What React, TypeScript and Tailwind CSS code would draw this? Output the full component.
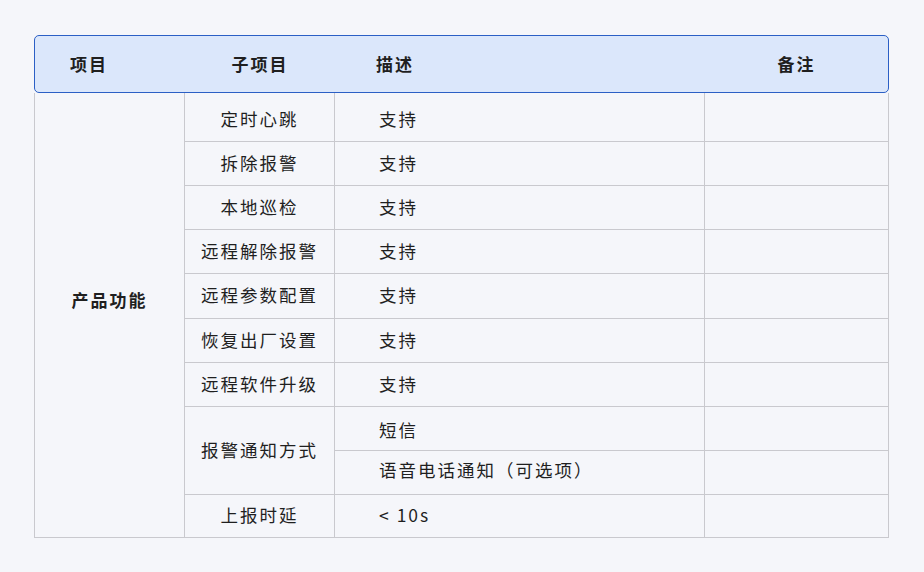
const rows = [
  { sub: "定时心跳", desc: "支持", h: "h-[48px]" },
  { sub: "拆除报警", desc: "支持", h: "h-[44px]" },
  { sub: "本地巡检", desc: "支持", h: "h-[44px]" },
  { sub: "远程解除报警", desc: "支持", h: "h-[44px]" },
  { sub: "远程参数配置", desc: "支持", h: "h-[45px]" },
  { sub: "恢复出厂设置", desc: "支持", h: "h-[44px]" },
  { sub: "远程软件升级", desc: "支持", h: "h-[44px]" },
  { sub: "报警通知方式", desc: "短信", h: "h-[44px]", span: 2, pad: "pt-[4px]" },
  { sub: "", desc: "语音电话通知（可选项）", h: "h-[44px]", skip: true, pad: "pb-[4px]" },
  { sub: "上报时延", desc: "< 10s", h: "h-[43px]" },
];

const cell = "border border-[#c9c9ce] p-0";

const App = () => {
  return (
    <div
      className="min-h-[572px] w-[924px] bg-[#f5f6fa] pt-[35px] pl-[34px] text-[#1f1f1f]"
      style={{ fontFamily: '"Noto Sans CJK SC", "Noto Sans", sans-serif' }}
    >
      <div className="w-[855px]">
        <div className="flex h-[58px] items-center rounded-[5px] border border-[#2b5fc5] bg-[#dbe7fb] text-[17px] font-bold tracking-[2px]">
          <div className="w-[150px] pl-[35px]">项目</div>
          <div className="w-[150px] text-center">子项目</div>
          <div className="w-[370px] pl-[41px]">描述</div>
          <div className="flex-1 text-center">备注</div>
        </div>

        <table className="w-[855px] table-fixed border-collapse text-[17.5px] tracking-[2px]">
          <colgroup>
            <col className="w-[150px]" />
            <col className="w-[150px]" />
            <col className="w-[370px]" />
            <col />
          </colgroup>
          <tbody>
            {rows.map((r, i) => (
              <tr key={i} className={r.h}>
                {i === 0 && (
                  <td rowSpan={10} className={`${cell} border-t-0 pb-[30px] text-center text-[17px] font-bold`}>
                    产品功能
                  </td>
                )}
                {!r.skip && (
                  <td
                    rowSpan={r.span ?? 1}
                    className={`${cell} text-center ${i === 0 ? "border-t-0 pt-[4px]" : ""}`}
                  >
                    {r.sub}
                  </td>
                )}
                <td className={`${cell} pl-[44px] ${i === 0 ? "border-t-0 pt-[4px]" : ""} ${r.pad ?? ""}`}>
                  {r.desc}
                </td>
                <td className={`${cell} ${i === 0 ? "border-t-0" : ""}`} />
              </tr>
            ))}
          </tbody>
        </table>
      </div>
    </div>
  );
};

export default App;
